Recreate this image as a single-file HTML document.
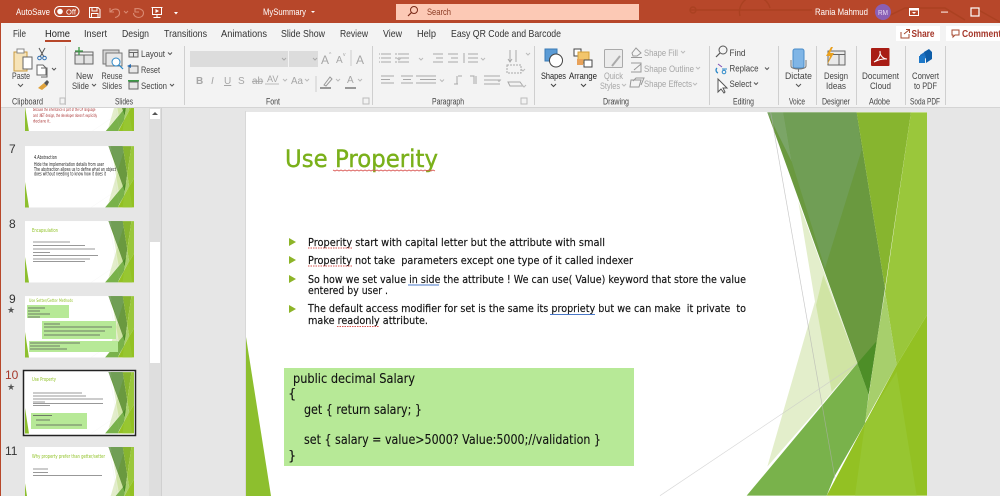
<!DOCTYPE html>
<html><head><meta charset="utf-8"><title>MySummary</title>
<style>
html,body{margin:0;padding:0;width:1000px;height:496px;overflow:hidden;background:#e6e6e6}
svg{display:block}
text{font-family:"Liberation Sans",sans-serif;fill:#444;font-size:9.5px}
.t text{fill:#fff}
.tab text{font-size:10.5px;fill:#333}
.lab text{font-size:9px;fill:#444}
.r text{font-size:9.5px;fill:#444}
.dis text{font-size:9.5px;fill:#a6a6a6}
.s text{font-family:"DejaVu Sans",sans-serif;font-size:11px;fill:#111;stroke:#111;stroke-width:.15px}
.c text{font-family:"DejaVu Sans",sans-serif;font-size:13px;fill:#111;stroke:#111;stroke-width:.1px}
.th text{font-family:"DejaVu Sans",sans-serif;font-size:10px;fill:#333}
.n text{font-size:12px;fill:#333}
.ic{fill:none;stroke:#666;stroke-width:1}
</style></head><body>
<svg xmlns="http://www.w3.org/2000/svg" width="1000" height="496" viewBox="0 0 1000 496">
<defs>
<clipPath id="sc"><rect width="681" height="384"/></clipPath>
<g id="deco" clip-path="url(#sc)">
<rect width="681" height="384" fill="#fff"/>
<path d="M0 225L25 384H0Z" fill="#8dbf2e"/>
<g transform="translate(494,-7) scale(.33333)">
<path d="M175 290L352 775L82 1085L225 590Z" fill="#e3eecb"/>
<path d="M250 510L352 775L275 860L228 600Z" fill="#d0e4a4"/>
<path d="M82 22H350L435 550L386 868Z" fill="#6a993f"/>
<path d="M82 22H130L155 170Z" fill="#7ba567"/>
<path d="M130 22H350L365 135L255 490L155 170Z" fill="#709e55"/>
<path d="M350 22H513L435 550Z" fill="#87b52f"/>
<path d="M513 22H561V630L470 780L435 560Z" fill="#9ac73b"/>
<path d="M435 560L470 780L375 950L410 710Z" fill="#a7cf6c"/>
<path d="M352 775L386 868L375 955L283 1115L260 1172H20Z" fill="#79b24b"/>
<path d="M352 775L410 708L386 868Z" fill="#4d8e27"/>
<path d="M561 630V1172H260L375 955L470 780Z" fill="#93c123"/>
<path d="M375 955L470 800L530 1172H345Z" fill="#97c631"/>
<path d="M92 22L285 1120" stroke="#b0b0b0" stroke-width="2" fill="none" opacity=".7"/>
<path d="M-240 1172L352 775" stroke="#c8c8c8" stroke-width="2" fill="none" opacity=".7"/>
</g>
</g>
</defs>

<!-- title bar -->
<rect width="1000" height="23" fill="#b7472a"/>
<g fill="none" stroke="#a8401f" stroke-width="1.400" opacity=".8">
<path d="M690 10H812M740 16A12 12 0 1 1 770 8M880 20L905 8H945L965 20M975 8L1000 22"/><circle cx="693" cy="10" r="3"/>
</g>
<rect x="0" y="23" width="1000" height="85" fill="#f3f3f3"/>
<rect x="0" y="107" width="1000" height="1" fill="#d4d4d4"/>
<rect x="0" y="23" width="1" height="473" fill="#b7472a"/>

<g class="t">
<text x="16" y="15" textLength="34" lengthAdjust="spacingAndGlyphs" style="font-size:9.500px">AutoSave</text>
<rect x="54.500" y="6.500" width="24.500" height="10" rx="5" fill="none" stroke="#fff"/>
<circle cx="60" cy="11.500" r="2.800" fill="#fff"/>
<text x="66" y="14.500" textLength="10" lengthAdjust="spacingAndGlyphs" style="font-size:7.500px">Off</text>
<path d="M89.500 7.500H98L100 9.500V17.500H89.500ZM92 7.500V11H97V7.500M91.500 17.500V13.500H98V17.500" fill="none" stroke="#fff"/>
<path d="M110 8V12H114M110.500 12C113 8 119 8 119.500 12.500C119.800 15 118 17 115 17.500" fill="none" stroke="#d98a73" stroke-width="1.100"/>
<path d="M124 11L126 13L128 11" fill="none" stroke="#d98a73"/>
<path d="M135 8V12H139M135 9C138 8 143.500 9 143.500 13C143.500 16 141 17.500 138.500 17.500C136 17.500 133.500 15.500 133.500 13" fill="none" stroke="#d98a73" stroke-width="1.100"/>
<path d="M151.500 7.500H162.500M152.500 7.500V14.500H161.500V7.500M157 14.500V17M153.500 17.500H160.500" fill="none" stroke="#fff"/><path d="M155.500 9L159 11L155.500 13Z" fill="#fff"/>
<path d="M173.500 9.500H178M174 12H178L176 14.500Z" fill="#fff"/>
<text x="263" y="15" textLength="43" lengthAdjust="spacingAndGlyphs">MySummary</text>
<path d="M311 11H315L313 13Z" fill="#fff"/>
<rect x="396" y="4" width="243" height="16" fill="#fcc9b5"/>
<circle cx="414" cy="10" r="3.500" fill="none" stroke="#7a2a18"/><path d="M411.500 12.500L408 16" stroke="#7a2a18" stroke-width="1.200"/>
<text x="427" y="15" textLength="24" lengthAdjust="spacingAndGlyphs" style="fill:#8a3a22;font-size:9.500px">Search</text>
<text x="815" y="15" textLength="53" lengthAdjust="spacingAndGlyphs" style="font-size:9.500px">Rania Mahmud</text>
<circle cx="883" cy="12" r="8" fill="#8a5fb5"/>
<text x="878" y="15" textLength="10" lengthAdjust="spacingAndGlyphs" style="font-size:7px;fill:#e9ddf5">RM</text>
<path d="M909.500 8.500H918.500V15.500H909.500Z" fill="none" stroke="#fff"/><path d="M909.500 9H918.500V10.500H909.500ZM912 12H916L914 14Z" fill="#fff"/>
<rect x="941" y="11.500" width="7" height="1.200" fill="#f3d7cf"/>
<rect x="971" y="8" width="8" height="8" fill="none" stroke="#fff" stroke-width="1.200"/>
</g>

<!-- tabs -->
<g class="tab">
<text x="13" y="37" textLength="13" lengthAdjust="spacingAndGlyphs">File</text>
<text x="45" y="37" textLength="25" lengthAdjust="spacingAndGlyphs" style="fill:#222">Home</text>
<rect x="45" y="40" width="26" height="2" fill="#b7472a"/>
<text x="84" y="37" textLength="23" lengthAdjust="spacingAndGlyphs">Insert</text>
<text x="122" y="37" textLength="27" lengthAdjust="spacingAndGlyphs">Design</text>
<text x="164" y="37" textLength="43" lengthAdjust="spacingAndGlyphs">Transitions</text>
<text x="221" y="37" textLength="46" lengthAdjust="spacingAndGlyphs">Animations</text>
<text x="281" y="37" textLength="44" lengthAdjust="spacingAndGlyphs">Slide Show</text>
<text x="340" y="37" textLength="28" lengthAdjust="spacingAndGlyphs">Review</text>
<text x="383" y="37" textLength="19" lengthAdjust="spacingAndGlyphs">View</text>
<text x="417" y="37" textLength="19" lengthAdjust="spacingAndGlyphs">Help</text>
<text x="451" y="37" textLength="110" lengthAdjust="spacingAndGlyphs">Easy QR Code and Barcode</text>
</g>
<rect x="896" y="26" width="44" height="15" fill="#fff"/>
<rect x="946" y="26" width="54" height="15" fill="#fff"/>
<path d="M901 32V38H909V34M904 34L909 30M906 29.500H909.500V33" fill="none" stroke="#a5492f"/>
<text x="911.500" y="37" textLength="23" lengthAdjust="spacingAndGlyphs" style="font-size:10px;font-weight:bold;fill:#a5372a">Share</text>
<path d="M952 30H959V35H955L953 37V35H952Z" fill="none" stroke="#a5492f"/>
<text x="962" y="37" textLength="44" lengthAdjust="spacingAndGlyphs" style="font-size:10px;font-weight:bold;fill:#a5372a">Comments</text>

<!-- separators -->
<g fill="#cfcfcf">
<rect x="65" y="46" width="1" height="59"/><rect x="184" y="46" width="1" height="59"/><rect x="372" y="46" width="1" height="59"/><rect x="534" y="46" width="1" height="59"/><rect x="709" y="46" width="1" height="59"/><rect x="778" y="46" width="1" height="59"/><rect x="816" y="46" width="1" height="59"/><rect x="856" y="46" width="1" height="59"/><rect x="905" y="46" width="1" height="59"/><rect x="945" y="46" width="1" height="59"/>
</g>

<!-- clipboard -->
<path d="M14 52H27V71H14Z" fill="#f6e3b8" stroke="#c99a3e"/><rect x="23" y="57" width="9" height="12" fill="#fff" stroke="#666"/><rect x="17" y="49" width="7" height="4" fill="#fff" stroke="#888"/>
<g class="r"><text x="12" y="79" textLength="18" lengthAdjust="spacingAndGlyphs">Paste</text></g>
<path d="M18 84L20.500 86.500L23 84" fill="none" stroke="#555"/>
<path d="M39 48L44 57M45 48L40 57" stroke="#555"/><circle cx="39.500" cy="58" r="1.800" fill="none" stroke="#2b6cb0"/><circle cx="44.500" cy="58" r="1.800" fill="none" stroke="#2b6cb0"/>
<path d="M37 65H43L46 68V75H37ZM41 68H47V77H41" fill="#fff" stroke="#666"/>
<path d="M52 68L54 70L56 68" fill="none" stroke="#555"/>
<path d="M38 88L44 83L47 86L42 90Z" fill="#e0a23a"/><path d="M44 83L47 80L49 82L47 86Z" fill="#555"/>

<!-- slides -->
<rect x="75" y="55" width="18" height="9" fill="#e3e3e3" stroke="#666"/><path d="M75 52H93V55M75 52V55M84 55V64" class="ic"/><path d="M79 47V55M75 51H83" stroke="#3c9a46" stroke-width="1.300"/>
<rect x="103" y="50" width="16" height="14" fill="#d5d5d5" stroke="#777"/><rect x="106" y="53" width="16" height="13" fill="#e7e7e7" stroke="#777"/><circle cx="116" cy="62" r="4" fill="#fff" stroke="#2b88c8"/><path d="M119 65L123 69" stroke="#2b88c8" stroke-width="1.200"/>
<g class="r"><text x="76" y="79" textLength="17" lengthAdjust="spacingAndGlyphs">New</text>
<text x="72" y="89" textLength="17" lengthAdjust="spacingAndGlyphs">Slide</text>
<text x="101.500" y="79" textLength="21" lengthAdjust="spacingAndGlyphs">Reuse</text>
<text x="102" y="89" textLength="20" lengthAdjust="spacingAndGlyphs">Slides</text>
<text x="141" y="57" textLength="24" lengthAdjust="spacingAndGlyphs">Layout</text>
<text x="141" y="73" textLength="19" lengthAdjust="spacingAndGlyphs">Reset</text>
<text x="141" y="89" textLength="26" lengthAdjust="spacingAndGlyphs">Section</text></g>
<path d="M92 84L94 86L96 84M168 52.500L170 54.500L172 52.500M170 84L172 86L174 84" fill="none" stroke="#555"/>
<rect x="129" y="50" width="9" height="7" fill="#e7e7e7" stroke="#666"/><path d="M129 52.500H138M133.500 52.500V57" class="ic"/>
<rect x="129" y="66" width="9" height="7" fill="#e7e7e7" stroke="#666"/><path d="M127 66L131 64V68Z" fill="#2b6cb0"/>
<rect x="129" y="82" width="9" height="7" fill="#e7e7e7" stroke="#666"/><rect x="128" y="80" width="11" height="1.600" fill="#3c9a46"/>

<!-- font -->
<rect x="190" y="51" width="98" height="16" fill="#dcdcdc"/><rect x="289" y="51" width="29" height="16" fill="#dcdcdc"/>
<path d="M282 58L284 60L286 58M313 58L315 60L317 58" fill="none" stroke="#aaa"/>
<g class="dis">
<text x="321" y="64" style="font-size:12px">A</text><text x="329" y="56" style="font-size:5px">^</text>
<text x="336" y="63" style="font-size:10px">A</text><text x="343" y="56" style="font-size:5px">v</text>
<text x="356" y="64" style="font-size:12px">A</text>
<text x="196" y="84" style="font-weight:bold;font-size:10px">B</text>
<text x="211" y="84" style="font-style:italic;font-size:10px">I</text>
<text x="224" y="84" style="font-size:10px;text-decoration:underline">U</text>
<text x="238" y="84" style="font-size:10px">S</text>
<text x="252" y="84" style="font-size:10px;text-decoration:line-through">ab</text>
<text x="267" y="82" style="font-size:9px">AV</text>
<text x="291" y="84" textLength="12" lengthAdjust="spacingAndGlyphs" style="font-size:10px">Aa</text>
<text x="347" y="83" style="font-size:10px">A</text>
</g>
<path d="M351 50V66" stroke="#ccc"/><path d="M316 76V92" stroke="#ccc"/>
<path d="M324 85L330 77L332 79L326 86Z" fill="none" stroke="#999"/><rect x="320" y="87" width="11" height="2" fill="#999"/><rect x="345" y="87" width="11" height="2" fill="#999"/>
<path d="M265 84H279M283 79L285 81L287 79M305 79L307 81L309 79M336 79L338 81L340 79M358 79L360 81L362 79" fill="none" stroke="#bbb"/>

<!-- paragraph -->
<g fill="none" stroke="#a8a8a8">
<path d="M381 54H391M381 58H391M381 62H391M379 54H380M379 58H380M379 62H380"/>
<path d="M398 54H409M398 58H409M398 62H409M395 54H397M395 58H397M395 62H397"/>
<path d="M433 54H443M436 58H443M433 62H443M448 54H458M451 58H458M448 62H458"/>
<path d="M468 54H478M468 58H478M468 62H478M464 53V63"/>
<path d="M381 76H394M381 79.500H390M381 83H394"/>
<path d="M401 76H413M403 79.500H411M401 83H413"/>
<path d="M416 76H429M420 79.500H429M416 83H429"/>
<path d="M426 76H436M426 79.500H436M426 83H436"/>
<path d="M454 84H458M457 76V84M458 76H462"/>
<path d="M470 76H474V84M476 76V84"/>
<path d="M484 76H500M484 80H500M484 84H500"/>
<path d="M510 50V62M516 50V62M508 59L510 62L512 59"/>
<rect x="507" y="65" width="14" height="8" stroke-dasharray="2 1"/>
<path d="M508 82H520L523 86H510Z"/>
<path d="M397 58L399 60L401 58M419 58L421 60L423 58M481 58L483 60L485 58M440 79.500L442 81.500L444 79.500M497 79.500L499 81.500L501 79.500M526 53L528 55L530 53M521 69L523 71L525 69M522 85L524 87L526 85" stroke="#bbb"/>
</g>
<path d="M521 98H527V104H521ZM363 98H369V104H363ZM60 98H65V104H60Z" fill="none" stroke="#bbb"/>

<!-- drawing -->
<rect x="545" y="49" width="12" height="12" fill="#5b9bd5" stroke="#3b7bb5"/><circle cx="556" cy="60.500" r="6.500" fill="#fff" stroke="#444"/>
<rect x="574" y="49" width="7" height="7" fill="#fff" stroke="#444"/><rect x="578" y="52" width="11" height="11" fill="#f2c56b" stroke="#d4a03a"/><rect x="577" y="59" width="6" height="6" fill="#e8a25a"/><rect x="584" y="60" width="8" height="7" fill="#fff" stroke="#444"/>
<rect x="604.500" y="49.500" width="18" height="18" rx="1" fill="#ececec" stroke="#aaa"/><path d="M612 66L620 56" stroke="#aaa" stroke-width="2"/>
<g class="r"><text x="541" y="79" textLength="25" lengthAdjust="spacingAndGlyphs" style="fill:#222">Shapes</text>
<text x="569" y="79" textLength="28" lengthAdjust="spacingAndGlyphs" style="fill:#222">Arrange</text></g>
<path d="M551 84L553.500 86.500L556 84M581 84L583.500 86.500L586 84" fill="none" stroke="#444"/>
<g class="dis"><text x="604" y="79" textLength="19" lengthAdjust="spacingAndGlyphs">Quick</text>
<text x="600" y="89" textLength="20" lengthAdjust="spacingAndGlyphs">Styles</text>
<text x="644" y="56" textLength="34" lengthAdjust="spacingAndGlyphs">Shape Fill</text>
<text x="644" y="72" textLength="50" lengthAdjust="spacingAndGlyphs">Shape Outline</text>
<text x="644" y="87" textLength="48" lengthAdjust="spacingAndGlyphs">Shape Effects</text></g>
<path d="M622 84L624 86L626 84M681 51L683 53L685 51M696 67L698 69L700 67M693 83L695 85L697 83" fill="none" stroke="#bbb"/>
<path d="M632 53L636 48L641 53L637 56H633ZM631 57.500H642M631 63H641V72H631M634 70L641 64M631 80H641L639 87H630ZM633 81L636 78H644L641 85" fill="none" stroke="#999"/>

<!-- editing -->
<circle cx="723" cy="50" r="4" fill="none" stroke="#555"/><path d="M720 53L716 57" stroke="#555" stroke-width="1.200"/>
<g class="r"><text x="729.500" y="56" textLength="16" lengthAdjust="spacingAndGlyphs">Find</text>
<text x="729.500" y="71.500" textLength="29" lengthAdjust="spacingAndGlyphs">Replace</text>
<text x="729.500" y="87" textLength="22" lengthAdjust="spacingAndGlyphs">Select</text></g>
<path d="M765 67.500L767 69.500L769 67.500M754 82.500L756 84.500L758 82.500" fill="none" stroke="#555"/>
<path d="M718 64L722 67" stroke="#7c4db5"/><path d="M717 68A3 3 0 0 0 718 73" fill="none" stroke="#2b88c8" stroke-width="1.300"/><path d="M722 69H727" stroke="#2b88c8"/><circle cx="724" cy="72" r="1.800" fill="none" stroke="#2b88c8"/>
<path d="M718 79V92L721 89L724 93L725 92L723 88H727Z" fill="#fff" stroke="#555"/>

<!-- voice etc -->
<rect x="793" y="49" width="11" height="19" rx="2" fill="#7fb5e6" stroke="#4a8cc8"/><path d="M791 60V66C791 70 806 70 806 66V60M798.500 69V72" fill="none" stroke="#777"/>
<path d="M796 84L798.500 86.500L801 84" fill="none" stroke="#555"/>
<g class="r"><text x="785" y="79" textLength="27" lengthAdjust="spacingAndGlyphs">Dictate</text>
<text x="824" y="79" textLength="24" lengthAdjust="spacingAndGlyphs">Design</text>
<text x="826" y="89" textLength="20" lengthAdjust="spacingAndGlyphs">Ideas</text>
<text x="862" y="79" textLength="37" lengthAdjust="spacingAndGlyphs">Document</text>
<text x="870" y="89" textLength="21" lengthAdjust="spacingAndGlyphs">Cloud</text>
<text x="912" y="79" textLength="27" lengthAdjust="spacingAndGlyphs">Convert</text>
<text x="914" y="89" textLength="23" lengthAdjust="spacingAndGlyphs">to PDF</text></g>
<rect x="828" y="51" width="17" height="14" fill="#e9e9e9" stroke="#666"/><path d="M833 54.500H845M839 54.500V65" class="ic"/><path d="M831 47L826 56H830L827 65L834 53H830L833 47Z" fill="#e8a020"/>
<rect x="871" y="48" width="18.500" height="18" rx="1" fill="#a81c14"/>
<path d="M874 62C878 60 881 55 880 51C879.500 55 883 59 887 59C883 58.500 878 60 874 62Z" fill="none" stroke="#fff"/>
<path d="M920 55L926 51L926 58L920 62Z" fill="#1e6fbf"/><path d="M924 52L929 49L932 52V59L926 63V57Z" fill="#0e5da8"/><rect x="919" y="56" width="6" height="7" fill="#1e78c8"/>

<!-- group labels -->
<g class="lab">
<text x="12" y="104.500" textLength="31" lengthAdjust="spacingAndGlyphs">Clipboard</text>
<text x="115" y="104.500" textLength="18" lengthAdjust="spacingAndGlyphs">Slides</text>
<text x="266" y="104.500" textLength="14" lengthAdjust="spacingAndGlyphs">Font</text>
<text x="432" y="104.500" textLength="32" lengthAdjust="spacingAndGlyphs">Paragraph</text>
<text x="603" y="104.500" textLength="26" lengthAdjust="spacingAndGlyphs">Drawing</text>
<text x="733" y="104.500" textLength="21" lengthAdjust="spacingAndGlyphs">Editing</text>
<text x="789" y="104.500" textLength="16" lengthAdjust="spacingAndGlyphs">Voice</text>
<text x="822" y="104.500" textLength="28" lengthAdjust="spacingAndGlyphs">Designer</text>
<text x="869" y="104.500" textLength="21" lengthAdjust="spacingAndGlyphs">Adobe</text>
<text x="910" y="104.500" textLength="30" lengthAdjust="spacingAndGlyphs">Soda PDF</text>
</g>

<!-- panel -->
<rect x="149" y="108" width="12" height="388" fill="#dedede"/>
<rect x="150" y="242" width="10" height="121" fill="#fff"/>
<rect x="150" y="109" width="10" height="10" fill="#fff"/><path d="M152 115H158L155 112Z" fill="#555"/>
<rect x="161" y="108" width="1" height="388" fill="#d0d0d0"/>

<!-- selected thumb frame -->
<rect x="23.500" y="370.500" width="112" height="65" fill="#fff" stroke="#222" stroke-width="1.500"/>

<!-- thumbnails -->
<svg x="25" y="108" width="109" height="23" viewBox="0 235 681 144" preserveAspectRatio="xMidYMin slice">
<use href="#deco"/><g class="th"><text x="50" y="255" style="fill:#a33;font-size:26px" textLength="390" lengthAdjust="spacingAndGlyphs">because the inheritance is part of the C# language</text><text x="50" y="290" style="fill:#a33;font-size:26px" textLength="400" lengthAdjust="spacingAndGlyphs">and .NET design, the developer doesn't explicitly</text><text x="50" y="325" style="fill:#a33;font-size:26px" textLength="110" lengthAdjust="spacingAndGlyphs">declare it.</text></g></svg>

<svg x="25" y="146" width="109" height="61.500" viewBox="0 0 681 384"><use href="#deco"/></svg>
<g class="th"><text x="34" y="159" textLength="23" lengthAdjust="spacingAndGlyphs" style="font-size:5px;fill:#222">4.Abstraction</text>
<text x="34" y="166" textLength="70" lengthAdjust="spacingAndGlyphs" style="font-size:5px;fill:#222">Hide the implementation details from user</text>
<text x="34" y="171" textLength="82" lengthAdjust="spacingAndGlyphs" style="font-size:5px;fill:#222">The abstraction allows us to define what an object</text>
<text x="34" y="175.500" textLength="72" lengthAdjust="spacingAndGlyphs" style="font-size:5px;fill:#222">does without needing to know how it does it</text></g>

<svg x="25" y="221" width="109" height="61.500" viewBox="0 0 681 384"><use href="#deco"/></svg>
<g class="th"><text x="32" y="232" textLength="26" lengthAdjust="spacingAndGlyphs" style="font-size:5px;fill:#90c226">Encapsulation</text></g>
<g stroke="#777" stroke-width=".8"><path d="M33 242H70M33 245.500H85M33 249H95M33 252.500H50M33 255.500H98M33 259H90M33 261.500H85"/></g>

<svg x="25" y="296" width="109" height="61.500" viewBox="0 0 681 384"><use href="#deco"/></svg>
<g><rect x="27" y="305" width="42" height="13" fill="#b7e997"/><rect x="42" y="321" width="74" height="18" fill="#b7e997"/><rect x="29" y="341" width="89" height="11" fill="#b7e997"/></g>
<g class="th"><text x="29" y="302" textLength="44" lengthAdjust="spacingAndGlyphs" style="font-size:4px;fill:#90c226">Use Setter/Getter Methods</text></g>
<g stroke="#555" stroke-width=".8"><path d="M28 308H45M28 311H40M28 314H50M28 317H40M44 324H60M44 327H112M44 331H105M44 335H100M30 343H80M30 346H60M30 349H67"/></g>

<svg x="25" y="372" width="109" height="61.500" viewBox="0 0 681 384"><use href="#deco"/></svg>
<rect x="31" y="413" width="56" height="16" fill="#b7e997"/>
<g class="th"><text x="32" y="381" textLength="24" lengthAdjust="spacingAndGlyphs" style="font-size:5px;fill:#90c226">Use Property</text></g>
<g stroke="#777" stroke-width=".8"><path d="M33 393H82M33 396H86M33 399H103M33 402H45M33 403.500H103M33 405.500H50"/></g>
<g stroke="#555" stroke-width=".8"><path d="M33 415.500H52M36 420H50M36 425H82"/></g>

<svg x="25" y="447" width="109" height="49" viewBox="0 0 681 306" preserveAspectRatio="xMidYMin slice"><use href="#deco"/></svg>
<g class="th"><text x="32" y="458" textLength="73" lengthAdjust="spacingAndGlyphs" style="font-size:5px;fill:#90c226">Why property prefer than getter/setter</text></g>
<g stroke="#777" stroke-width=".8"><path d="M33 469H48M33 472.500H48M33 475.500H102"/></g>

<g class="n">
<text x="9" y="153">7</text>
<text x="9" y="228">8</text>
<text x="9" y="303">9</text>
<text x="5" y="379" style="fill:#a5372a">10</text>
<text x="5" y="455">11</text>
<text x="7" y="313" style="font-size:9px;fill:#555;font-family:'DejaVu Sans',sans-serif">★</text>
<text x="7" y="390" style="font-size:9px;fill:#555;font-family:'DejaVu Sans',sans-serif">★</text>
</g>

<!-- main slide -->
<svg x="246" y="112" width="681" height="384" viewBox="0 0 681 384"><use href="#deco"/></svg>
<rect x="245" y="111" width="1" height="385" fill="#d8d8d8"/>

<text x="285" y="167" textLength="153" lengthAdjust="spacingAndGlyphs" style="font-family:'DejaVu Sans',sans-serif;font-size:24px;fill:#7ab01a;stroke:#7ab01a;stroke-width:.4px">Use Properity</text>
<path d="M333 170l2 1 2-1 2 1 2-1 2 1 2-1 2 1 2-1 2 1 2-1 2 1 2-1 2 1 2-1 2 1 2-1 2 1 2-1 2 1 2-1 2 1 2-1 2 1 2-1 2 1 2-1 2 1 2-1 2 1 2-1 2 1 2-1 2 1 2-1 2 1 2-1 2 1 2-1 2 1 2-1 2 1 2-1 2 1 2-1 2 1 2-1 2 1 2-1 2 1 2-1 2 1" fill="none" stroke="#d9534f" stroke-width=".9"/>

<g fill="#8db428"><path d="M289 238L296 242L289 246Z"/><path d="M289 256L296 260L289 264Z"/><path d="M289 275L296 279L289 283Z"/><path d="M289 305L296 309L289 313Z"/></g>
<g class="s">
<text x="308" y="246" textLength="297" lengthAdjust="spacingAndGlyphs">Properity start with capital letter but the attribute with small</text>
<text x="308" y="264" textLength="325" lengthAdjust="spacingAndGlyphs" xml:space="preserve">Properity not take  parameters except one type of it called indexer</text>
<text x="308" y="283" textLength="438" lengthAdjust="spacingAndGlyphs">So how we set value in side the attribute ! We can use( Value) keyword that store the value</text>
<text x="308" y="294" textLength="80" lengthAdjust="spacingAndGlyphs">entered by user .</text>
<text x="308" y="312" textLength="438" lengthAdjust="spacingAndGlyphs" xml:space="preserve">The default access modifier for set is the same its propriety but we can make  it private  to</text>
<text x="308" y="324" textLength="120" lengthAdjust="spacingAndGlyphs">make readonly attribute.</text>
</g>
<g fill="none" stroke-width=".9">
<path d="M308 248H353M308 266H353M337 326.500H379" stroke="#d9534f" stroke-dasharray="1.500 1"/>
<path d="M408 285H439M550 314.500H595" stroke="#4a78c8"/>
</g>

<rect x="284" y="368" width="350" height="98" fill="#b7e997"/>
<g class="c">
<text x="293" y="383" textLength="122" lengthAdjust="spacingAndGlyphs">public decimal Salary</text>
<text x="288" y="398">{</text>
<text x="304" y="414" textLength="118" lengthAdjust="spacingAndGlyphs">get { return salary; }</text>
<text x="304" y="444" textLength="297" lengthAdjust="spacingAndGlyphs">set { salary = value&gt;5000? Value:5000;//validation }</text>
<text x="288" y="460">}</text>
</g>
</svg>
</body></html>
